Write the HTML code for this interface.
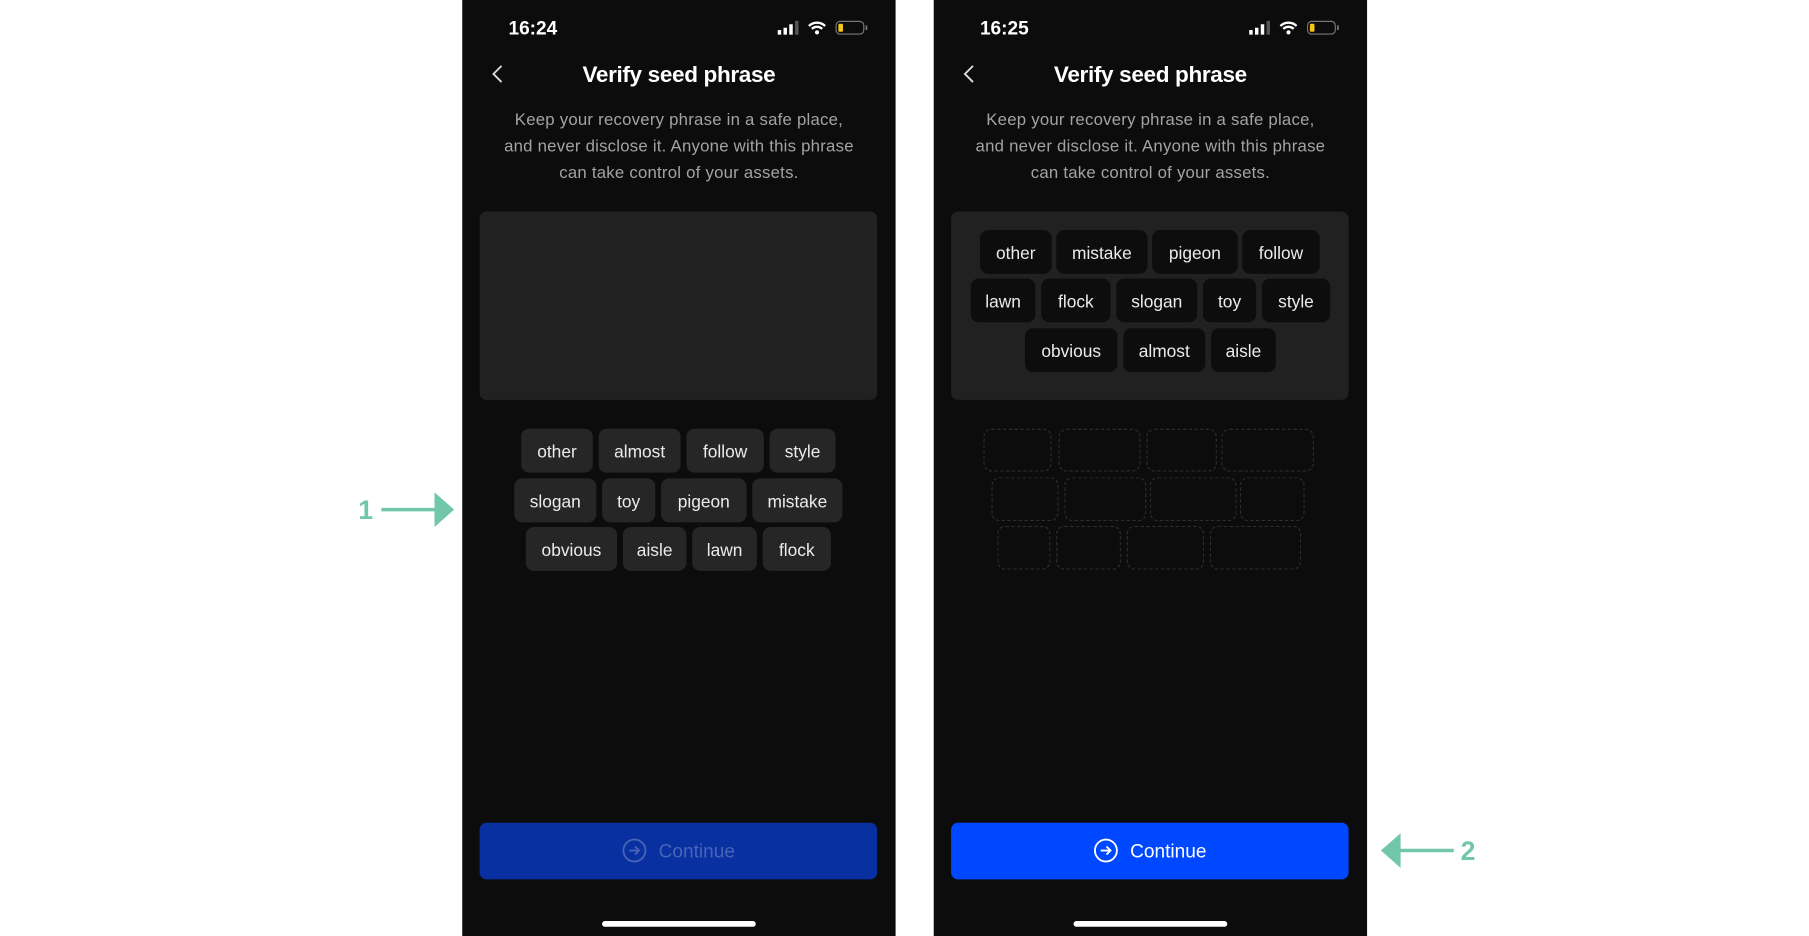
<!DOCTYPE html>
<html><head><meta charset="utf-8"><style>
html,body{margin:0;padding:0;background:#fff;width:1809px;height:936px;overflow:hidden}
#w{position:absolute;left:0;top:0;width:1565px;height:810px;transform:scale(1.1556);transform-origin:0 0;font-family:"Liberation Sans",sans-serif}
.ph{position:absolute;top:0;width:375px;height:810px;background:#0c0c0c;overflow:hidden}
.a{position:absolute}
.time{position:absolute;left:40px;top:16px;color:#fff;font-size:16.5px;font-weight:bold}
.title{position:absolute;left:0;width:375px;text-align:center;top:54px;color:#fff;font-size:19.5px;font-weight:bold;letter-spacing:-0.3px}
.p{position:absolute;left:0;width:375px;text-align:center;top:93px;color:#a3a3a3;font-size:14.5px;line-height:23px;letter-spacing:0.2px}
.box{position:absolute;left:15px;top:183px;width:344px;height:163px;background:#212121;border-radius:6px}
.c{position:absolute;height:38px;line-height:41px;text-align:center;border-radius:7px;color:#ececec;font-size:15px;background:#262626}
.c2{background:#0d0d0d}
.d{position:absolute;border:1px dashed #2e2e2e;border-radius:7px;box-sizing:border-box}
.btn{position:absolute;left:15px;top:712px;width:344px;height:49px;border-radius:6px;text-align:center;line-height:51px;font-size:16.5px}
.home{position:absolute;left:121px;top:797px;width:133px;height:5px;border-radius:3px;background:#fff}
.ann{position:absolute;color:#72c6aa;font-weight:bold;font-size:23px}
</style></head><body><div id="w">

<!-- Phone 1 -->
<div class="ph" style="left:400px">
<div class="time">16:24</div>
<svg class="a" style="left:272px;top:17px" width="80" height="16" viewBox="0 0 80 16">
<rect x="1" y="9" width="3" height="4" fill="#fff"/><rect x="6" y="7" width="3" height="6" fill="#fff"/><rect x="11" y="4" width="3" height="9" fill="#fff"/><rect x="16" y="1" width="3" height="12" fill="#555"/>
<path d="M28 5.5a10 10 0 0 1 14 0M30.5 8a6.5 6.5 0 0 1 9 0" stroke="#fff" stroke-width="2" fill="none"/><circle cx="35" cy="11" r="1.8" fill="#fff"/>
<rect x="51.5" y="1.5" width="24" height="11" rx="3.5" stroke="#777" fill="none"/><rect x="53.5" y="3.5" width="4" height="7" rx="1" fill="#f5c518"/><rect x="77" y="5" width="1.5" height="4" fill="#777"/>
</svg>
<svg class="a" style="left:24px;top:55px" width="14" height="18"><path d="M10 2L3 9l7 7" stroke="#ddd" stroke-width="1.6" fill="none"/></svg>
<div class="title">Verify seed phrase</div>
<div class="p">Keep your recovery phrase in a safe place,<br>and never disclose it. Anyone with this phrase<br>can take control of your assets.</div>
<div class="box"></div>
<div class="c" style="left:51px;top:371px;width:62px">other</div>
<div class="c" style="left:118px;top:371px;width:71px">almost</div>
<div class="c" style="left:194px;top:371px;width:67px">follow</div>
<div class="c" style="left:266px;top:371px;width:57px">style</div>
<div class="c" style="left:45px;top:414px;width:71px">slogan</div>
<div class="c" style="left:121px;top:414px;width:46px">toy</div>
<div class="c" style="left:172px;top:414px;width:74px">pigeon</div>
<div class="c" style="left:251px;top:414px;width:78px">mistake</div>
<div class="c" style="left:55px;top:456px;width:79px">obvious</div>
<div class="c" style="left:139px;top:456px;width:55px">aisle</div>
<div class="c" style="left:199px;top:456px;width:56px">lawn</div>
<div class="c" style="left:260px;top:456px;width:59px">flock</div>
<div class="btn" style="background:#0830a0;color:#4863b8"><svg style="vertical-align:middle;margin-right:10px;margin-top:-3px" width="22" height="22" viewBox="0 0 22 22"><circle cx="11" cy="11" r="9.5" stroke="#4863b8" stroke-width="1.6" fill="none"/><path d="M6.5 11h8.5M11.5 7.5L15 11l-3.5 3.5" stroke="#4863b8" stroke-width="1.6" fill="none"/></svg>Continue</div>
<div class="home"></div>
</div>

<!-- Phone 2 -->
<div class="ph" style="left:808px">
<div class="time">16:25</div>
<svg class="a" style="left:272px;top:17px" width="80" height="16" viewBox="0 0 80 16">
<rect x="1" y="9" width="3" height="4" fill="#fff"/><rect x="6" y="7" width="3" height="6" fill="#fff"/><rect x="11" y="4" width="3" height="9" fill="#fff"/><rect x="16" y="1" width="3" height="12" fill="#555"/>
<path d="M28 5.5a10 10 0 0 1 14 0M30.5 8a6.5 6.5 0 0 1 9 0" stroke="#fff" stroke-width="2" fill="none"/><circle cx="35" cy="11" r="1.8" fill="#fff"/>
<rect x="51.5" y="1.5" width="24" height="11" rx="3.5" stroke="#777" fill="none"/><rect x="53.5" y="3.5" width="4" height="7" rx="1" fill="#f5c518"/><rect x="77" y="5" width="1.5" height="4" fill="#777"/>
</svg>
<svg class="a" style="left:24px;top:55px" width="14" height="18"><path d="M10 2L3 9l7 7" stroke="#ddd" stroke-width="1.6" fill="none"/></svg>
<div class="title">Verify seed phrase</div>
<div class="p">Keep your recovery phrase in a safe place,<br>and never disclose it. Anyone with this phrase<br>can take control of your assets.</div>
<div class="box"></div>
<div class="c c2" style="left:40px;top:199px;width:62px">other</div>
<div class="c c2" style="left:106px;top:199px;width:79px">mistake</div>
<div class="c c2" style="left:189px;top:199px;width:74px">pigeon</div>
<div class="c c2" style="left:267px;top:199px;width:67px">follow</div>
<div class="c c2" style="left:32px;top:241px;width:56px">lawn</div>
<div class="c c2" style="left:93px;top:241px;width:60px">flock</div>
<div class="c c2" style="left:158px;top:241px;width:70px">slogan</div>
<div class="c c2" style="left:233px;top:241px;width:46px">toy</div>
<div class="c c2" style="left:284px;top:241px;width:59px">style</div>
<div class="c c2" style="left:79px;top:284px;width:80px">obvious</div>
<div class="c c2" style="left:164px;top:284px;width:71px">almost</div>
<div class="c c2" style="left:240px;top:284px;width:56px">aisle</div>
<div class="d" style="left:43px;top:371px;width:59px;height:37px"></div>
<div class="d" style="left:108px;top:371px;width:71px;height:37px"></div>
<div class="d" style="left:184px;top:371px;width:61px;height:37px"></div>
<div class="d" style="left:249px;top:371px;width:80px;height:37px"></div>
<div class="d" style="left:50px;top:413px;width:58px;height:38px"></div>
<div class="d" style="left:113px;top:413px;width:71px;height:38px"></div>
<div class="d" style="left:187px;top:413px;width:75px;height:38px"></div>
<div class="d" style="left:265px;top:413px;width:56px;height:38px"></div>
<div class="d" style="left:55px;top:455px;width:46px;height:38px"></div>
<div class="d" style="left:106px;top:455px;width:56px;height:38px"></div>
<div class="d" style="left:167px;top:455px;width:67px;height:38px"></div>
<div class="d" style="left:239px;top:455px;width:79px;height:38px"></div>
<div class="btn" style="background:#0048ff;color:#fff"><svg style="vertical-align:middle;margin-right:10px;margin-top:-3px" width="22" height="22" viewBox="0 0 22 22"><circle cx="11" cy="11" r="9.5" stroke="#fff" stroke-width="1.6" fill="none"/><path d="M6.5 11h8.5M11.5 7.5L15 11l-3.5 3.5" stroke="#fff" stroke-width="1.6" fill="none"/></svg>Continue</div>
<div class="home"></div>
</div>

<!-- annotations -->
<div class="ann" style="left:310px;top:428px">1</div>
<svg class="a" style="left:328px;top:425px" width="70" height="34"><path d="M2 16h50" stroke="#72c6aa" stroke-width="3"/><path d="M48 1L65 16 48 31z" fill="#72c6aa"/></svg>
<div class="ann" style="left:1264px;top:723px">2</div>
<svg class="a" style="left:1192px;top:720px" width="70" height="34"><path d="M18 16h48" stroke="#72c6aa" stroke-width="3"/><path d="M20 1L3 16 20 31z" fill="#72c6aa"/></svg>

</div></body></html>
